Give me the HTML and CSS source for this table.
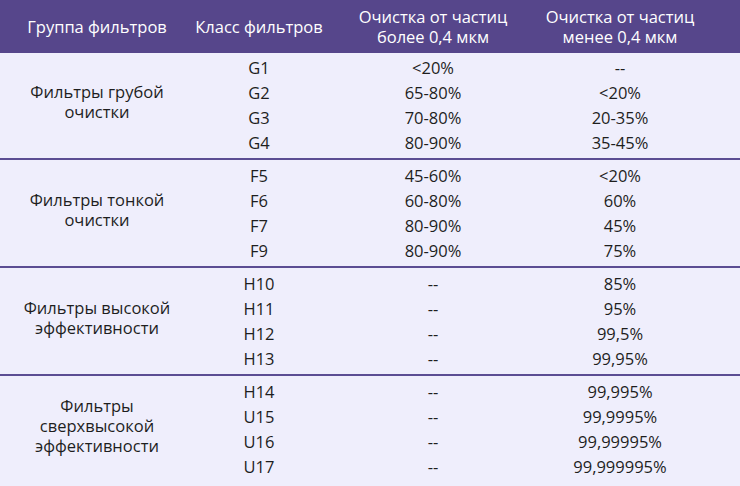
FILE: index.html
```html
<!DOCTYPE html>
<html lang="ru">
<head>
<meta charset="utf-8">
<link rel="stylesheet" href="styles.css">
</head>
<body>
<div class="table">
  <div class="head">
    <div class="th">Группа фильтров</div>
    <div class="th">Класс фильтров</div>
    <div class="th"><div>Очистка от частиц</div><div>более 0,4 мкм</div></div>
    <div class="th"><div>Очистка от частиц</div><div>менее 0,4 мкм</div></div>
  </div>
  <div class="group">
    <div class="label">Фильтры грубой<br>очистки</div>
    <div class="c">G1</div><div class="c">&lt;20%</div><div class="c">--</div>
    <div class="c">G2</div><div class="c">65-80%</div><div class="c">&lt;20%</div>
    <div class="c">G3</div><div class="c">70-80%</div><div class="c">20-35%</div>
    <div class="c">G4</div><div class="c">80-90%</div><div class="c">35-45%</div>
  </div>
  <div class="group sep">
    <div class="label">Фильтры тонкой<br>очистки</div>
    <div class="c">F5</div><div class="c">45-60%</div><div class="c">&lt;20%</div>
    <div class="c">F6</div><div class="c">60-80%</div><div class="c">60%</div>
    <div class="c">F7</div><div class="c">80-90%</div><div class="c">45%</div>
    <div class="c">F9</div><div class="c">80-90%</div><div class="c">75%</div>
  </div>
  <div class="group sep">
    <div class="label">Фильтры высокой<br>эффективности</div>
    <div class="c">H10</div><div class="c">--</div><div class="c">85%</div>
    <div class="c">H11</div><div class="c">--</div><div class="c">95%</div>
    <div class="c">H12</div><div class="c">--</div><div class="c">99,5%</div>
    <div class="c">H13</div><div class="c">--</div><div class="c">99,95%</div>
  </div>
  <div class="group sep">
    <div class="label">Фильтры<br>сверхвысокой<br>эффективности</div>
    <div class="c">H14</div><div class="c">--</div><div class="c">99,995%</div>
    <div class="c">U15</div><div class="c">--</div><div class="c">99,9995%</div>
    <div class="c">U16</div><div class="c">--</div><div class="c">99,99995%</div>
    <div class="c">U17</div><div class="c">--</div><div class="c">99,999995%</div>
  </div>
</div>
</body>
</html>
```
FILE: styles.css
```css
html, body {
  margin: 0;
  padding: 0;
  background: #efeefc;
}
body {
  font-family: "Open Sans", "Liberation Sans", sans-serif;
  font-size: 16.5px;
  color: #1e1e1e;
  width: 740px;
  height: 486px;
  overflow: hidden;
}
.head, .group {
  display: grid;
  grid-template-columns: 194px 130px 218px 156px;
  padding-right: 42px;
}
.head {
  background: #56468b;
  color: #fff;
  height: 53px;
  align-items: center;
  line-height: 20px;
}
.th {
  text-align: center;
}
.group {
  grid-template-rows: repeat(4, 25px);
  padding: 2px 42px 3px 0;
}
.sep {
  border-top: 2px solid #5b4d93;
  padding-top: 3px;
}
.label {
  grid-row: 1 / span 4;
  align-self: center;
  text-align: center;
  line-height: 20px;
  margin-bottom: 6px;
}
.c {
  text-align: center;
  line-height: 25px;
}
```
